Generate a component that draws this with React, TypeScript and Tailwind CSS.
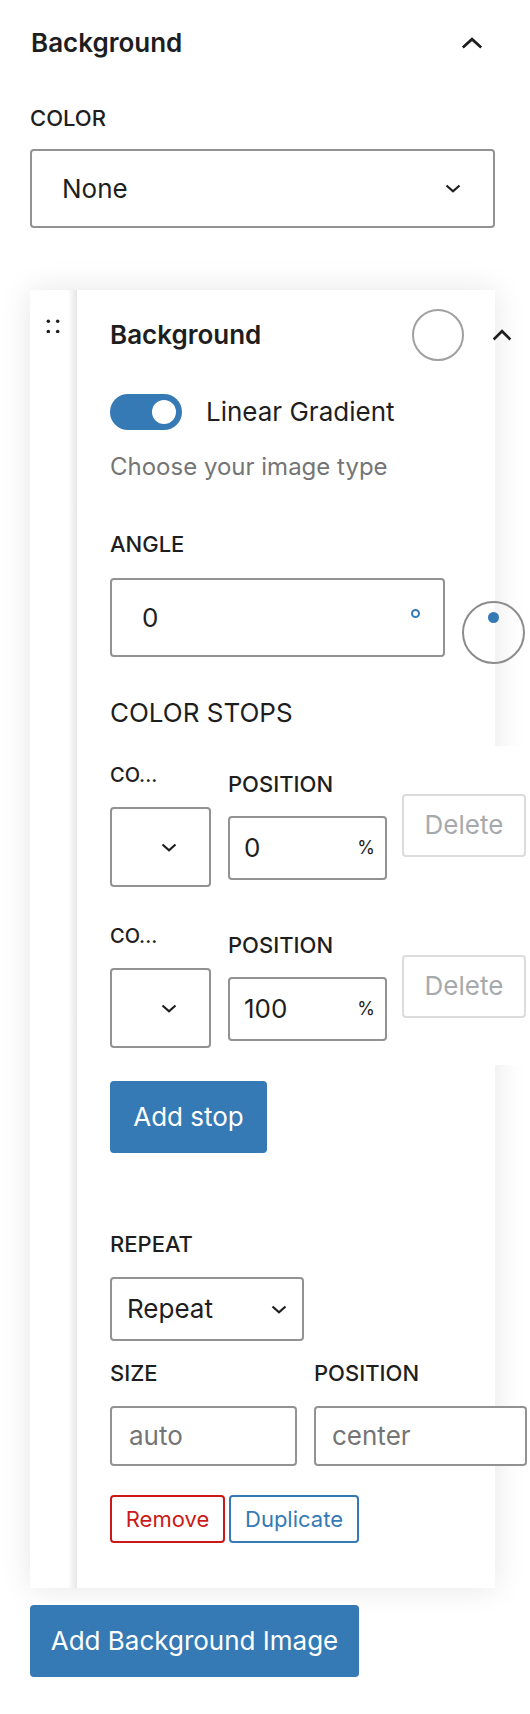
import React from "react";

const ChevronDown = () => (
  <svg width="16" height="9" viewBox="0 0 16 9" fill="none">
    <polyline points="1.5,1.5 8,7.3 14.5,1.5" stroke="#1e1e1e" strokeWidth="2.2" />
  </svg>
);

const ChevronUp = ({ w = 22 }: { w?: number }) => (
  <svg width={w} height="12" viewBox="0 0 22 12" fill="none" preserveAspectRatio="none">
    <polyline points="1.8,10.5 11,2.2 20.2,10.5" stroke="#1e1e1e" strokeWidth="2.8" />
  </svg>
);

function StopRow({ value }: { value: string }) {
  return (
    <div className="flex items-center">
      <div className="flex w-[101px] flex-col">
        <span className="text-[20px] font-medium leading-[24px]">CO...</span>
        <div className="mt-[20px] flex h-[80px] w-[101px] items-center justify-end rounded-[4px] border-2 border-[#929292] pr-[32px]">
          <ChevronDown />
        </div>
      </div>
      <div className="ml-[17px] flex w-[159px] flex-col">
        <span className="text-[22px] font-medium leading-[28px]">POSITION</span>
        <div className="mt-[18px] flex h-[64px] w-[159px] items-center justify-between rounded-[4px] border-2 border-[#929292] bg-white pl-[14px] pr-[10px]">
          <span className="text-[26px] leading-[32px]">{value}</span>
          <span className="text-[18px] leading-[20px]">%</span>
        </div>
      </div>
      <div className="ml-[15px] flex h-[63px] w-[124px] items-center justify-center rounded-[4px] border-2 border-[#dcdcde] bg-white text-[26px] leading-[32px] text-[#a7aaad]">
        Delete
      </div>
    </div>
  );
}

export default function App() {
  return (
    <div className="min-h-[1714px] w-[530px] overflow-hidden bg-white pl-[30px] pt-[19px] text-[#1e1e1e] [font-family:Inter,sans-serif]">
      {/* top header */}
      <div className="flex h-[48px] w-[465px] items-center justify-between pl-[1px] pr-[12px]">
        <span className="text-[26px] font-semibold leading-[32px]">Background</span>
        <ChevronUp />
      </div>

      <div className="mt-[37px] text-[22px] font-medium leading-[28px]">COLOR</div>
      <div className="mt-[17px] flex h-[79px] w-[465px] items-center justify-between rounded-[4px] border-2 border-[#929292] pl-[30px] pr-[32px]">
        <span className="text-[26px] leading-[32px]">None</span>
        <ChevronDown />
      </div>

      {/* card */}
      <div className="mt-[62px] flex w-[465px] bg-white shadow-[0_0_30px_rgba(0,0,0,0.1)]">
        <div className="flex w-[47px] shrink-0">
          <div className="w-[38px] pl-[16px] pt-[29px]">
            <svg width="14" height="14" viewBox="0 0 14 14">
              <circle cx="2.3" cy="2.2" r="1.75" fill="#1e1e1e" />
              <circle cx="11.7" cy="2.2" r="1.75" fill="#1e1e1e" />
              <circle cx="2.3" cy="12.5" r="1.75" fill="#1e1e1e" />
              <circle cx="11.7" cy="12.5" r="1.75" fill="#1e1e1e" />
            </svg>
          </div>
          <div className="w-[9px] bg-linear-to-r from-white to-[#e6e6e6]" />
        </div>

        <div className="w-[418px] pb-[45px] pl-[33px] pt-[19px]">
          {/* inner header */}
          <div className="flex h-[52px] w-[402px] items-center">
            <span className="flex-1 text-[26px] font-semibold leading-[32px]">Background</span>
            <div className="h-[52px] w-[52px] rounded-full border-2 border-[#a0a0a0]" />
            <div className="ml-[28px] flex w-[20px] items-center">
              <ChevronUp w={20} />
            </div>
          </div>

          {/* toggle */}
          <div className="mt-[33px] flex h-[36px] items-center">
            <div className="flex h-[36px] w-[72px] items-center justify-end rounded-full bg-[#3579b5] pr-[6px]">
              <div className="h-[24px] w-[24px] rounded-full bg-white" />
            </div>
            <span className="ml-[24px] text-[26px] leading-[32px]">Linear Gradient</span>
          </div>
          <div className="mt-[21px] text-[24px] leading-[32px] text-[#757575]">Choose your image type</div>

          {/* angle */}
          <div className="mt-[47px] text-[22px] font-medium leading-[28px]">ANGLE</div>
          <div className="mt-[20px] flex items-start">
            <div className="flex h-[79px] w-[335px] shrink-0 items-center justify-between rounded-[4px] border-2 border-[#929292] pl-[30px] pr-[23px]">
              <span className="text-[26px] leading-[32px]">0</span>
              <div className="-mt-[8px] h-[9px] w-[9px] rounded-full border-2 border-[#3579b5]" />
            </div>
            <div className="ml-[17px] mt-[23px] flex h-[63px] w-[63px] shrink-0 justify-center rounded-full border-2 border-[#8c8c8c] pt-[9px]">
              <div className="h-[11px] w-[11px] rounded-full bg-[#3579b5]" />
            </div>
          </div>

          <div className="mt-[33px] text-[26px] leading-[32px]">COLOR STOPS</div>

          <div className="mt-[17px] flex w-[430px] flex-col gap-[37px] bg-white py-[17px]">
            <StopRow value="0" />
            <StopRow value="100" />
          </div>

          <div className="mt-[16px] flex h-[72px] w-[157px] items-center justify-center rounded-[4px] bg-[#3579b5] text-[26px] leading-[32px] text-white">
            Add stop
          </div>

          <div className="mt-[77px] text-[22px] font-medium leading-[28px]">REPEAT</div>
          <div className="mt-[19px] flex h-[64px] w-[194px] items-center justify-between rounded-[4px] border-2 border-[#929292] pl-[15px] pr-[15px]">
            <span className="text-[26px] leading-[32px]">Repeat</span>
            <ChevronDown />
          </div>

          <div className="mt-[18px] flex">
            <div className="flex w-[187px] shrink-0 flex-col">
              <span className="text-[22px] font-medium leading-[28px]">SIZE</span>
              <div className="mt-[19px] flex h-[60px] items-center rounded-[4px] border-2 border-[#929292] bg-white pl-[17px] text-[26px] leading-[32px] text-[#757575]">
                auto
              </div>
            </div>
            <div className="ml-[17px] flex w-[213px] shrink-0 flex-col">
              <span className="text-[22px] font-medium leading-[28px]">POSITION</span>
              <div className="mt-[19px] flex h-[60px] items-center rounded-[4px] border-2 border-[#929292] bg-white pl-[16px] text-[26px] leading-[32px] text-[#757575]">
                center
              </div>
            </div>
          </div>

          <div className="mt-[29px] flex">
            <div className="flex h-[48px] w-[115px] items-center justify-center rounded-[4px] border-2 border-[#cc1818] text-[22px] leading-[28px] text-[#cc1818]">
              Remove
            </div>
            <div className="ml-[4px] flex h-[48px] w-[130px] items-center justify-center rounded-[4px] border-2 border-[#3579b5] text-[22px] leading-[28px] text-[#3579b5]">
              Duplicate
            </div>
          </div>
        </div>
      </div>

      <div className="mt-[17px] flex h-[72px] w-[329px] items-center justify-center rounded-[4px] bg-[#3579b5] text-[26px] leading-[32px] text-white">
        Add Background Image
      </div>
    </div>
  );
}
